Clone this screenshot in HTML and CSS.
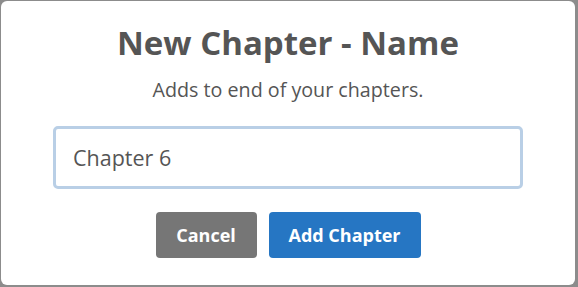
FILE: index.html
```html
<!DOCTYPE html>
<html>
<head>
<meta charset="utf-8">
<link rel="stylesheet" href="styles.css">
</head>
<body>
<div class="backdrop">
  <div class="dialog">
    <h1 class="title">New Chapter - Name</h1>
    <p class="subtitle">Adds to end of your chapters.</p>
    <div class="field">Chapter 6</div>
    <div class="actions">
      <button class="btn btn-cancel">Cancel</button>
      <button class="btn btn-primary">Add Chapter</button>
    </div>
  </div>
</div>
</body>
</html>
```
FILE: styles.css
```css
html, body {
  margin: 0;
  padding: 0;
}
body {
  width: 578px;
  height: 287px;
  background: #8c8c8c;
  font-family: "Open Sans", "Noto Sans", sans-serif;
  overflow: hidden;
}
.backdrop {
  padding: 1px 3px 2px 1px;
  height: 284px;
}
.dialog {
  height: 100%;
  box-sizing: border-box;
  background: #fff;
  border-radius: 6px;
  display: flex;
  flex-direction: column;
  align-items: center;
  padding-top: 22px;
}
.title {
  margin: 0;
  font-size: 33px;
  line-height: 40px;
  font-weight: 700;
  color: #555;
}
.subtitle {
  margin: 15px 0 0;
  font-size: 19.7px;
  line-height: 24px;
  color: #555;
}
.field {
  margin-top: 24px;
  width: 470px;
  height: 63px;
  box-sizing: border-box;
  border: 3px solid #b9cfe6;
  border-radius: 5px;
  padding: 0 17px;
  display: flex;
  align-items: center;
  font-size: 21.5px;
  color: #555;
}
.actions {
  margin-top: 23px;
  display: flex;
  gap: 12px;
}
.btn {
  height: 46px;
  border: none;
  border-radius: 4px;
  color: #fff;
  font-family: inherit;
  font-size: 18px;
  font-weight: 700;
  padding: 0;
}
.btn-cancel {
  background: #767676;
  width: 101px;
}
.btn-primary {
  background: #2676c3;
  width: 152px;
}
```
